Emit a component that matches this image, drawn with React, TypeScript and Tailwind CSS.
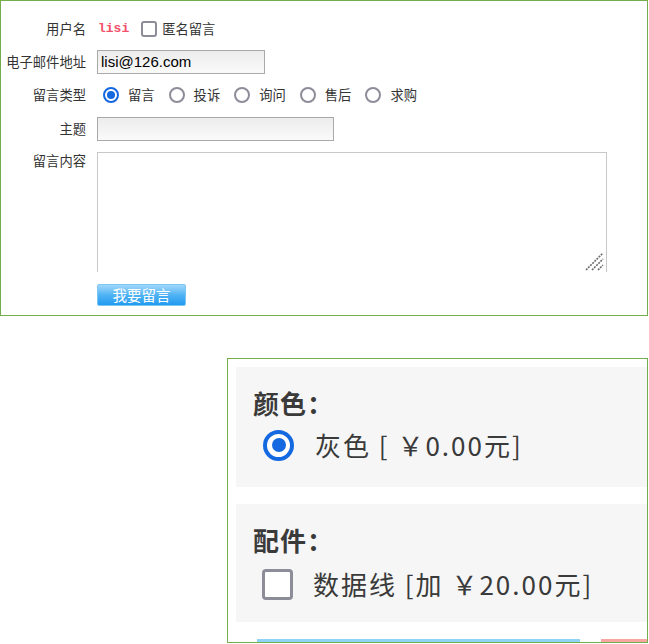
import React from "react";

const cjk = { fontFamily: '"Noto Sans CJK SC", "Noto Sans", sans-serif' };

function Radio({ checked }: { checked?: boolean }) {
  return checked ? (
    <span className="w-[16px] h-[16px] rounded-full border-2 border-[#1468e0] bg-white flex items-center justify-center shrink-0">
      <span className="w-[8px] h-[8px] rounded-full bg-[#1468e0]" />
    </span>
  ) : (
    <span className="w-[16px] h-[16px] rounded-full border-2 border-[#8d8d9a] bg-white shrink-0" />
  );
}

const types = ["留言", "投诉", "询问", "售后", "求购"];

export default function App() {
  return (
    <div className="w-[649px] h-[644px] bg-white text-[#333]" style={cjk}>
      {/* message form */}
      <div className="w-[648px] h-[316px] border border-[#74ad4b] flex flex-col text-[13.3px]">
        <div className="flex items-center h-[24px] mt-[16px]">
          <div className="w-[85px] text-right">用户名</div>
          <span
            className="ml-[12px] text-[13px] font-bold text-[#f4506c]"
            style={{ fontFamily: '"Liberation Mono", monospace' }}
          >
            lisi
          </span>
          <span className="ml-[12px] w-[16px] h-[16px] rounded-[3px] border-2 border-[#8d8d9a] bg-white" />
          <span className="ml-[5px]">匿名留言</span>
        </div>

        <div className="flex items-center h-[24px] mt-[9px]">
          <div className="w-[85px] text-right">电子邮件地址</div>
          <div
            className="ml-[11px] w-[168px] h-[24px] border border-[#a9a9a9] bg-gradient-to-b from-[#ececec] to-[#fafafa] flex items-center px-[3px] text-[15px] text-black"
            style={{ fontFamily: '"Liberation Sans", Arial, sans-serif' }}
          >
            lisi@126.com
          </div>
        </div>

        <div className="flex items-center h-[24px] mt-[9px]">
          <div className="w-[85px] text-right">留言类型</div>
          <div className="ml-[17px] flex items-center">
            {types.map((t, i) => (
              <div key={t} className={`flex items-center ${i > 0 ? "ml-[14px]" : ""}`}>
                <Radio checked={i === 0} />
                <span className="ml-[9px]">{t}</span>
              </div>
            ))}
          </div>
        </div>

        <div className="flex items-center h-[24px] mt-[10px]">
          <div className="w-[85px] text-right">主题</div>
          <div className="ml-[11px] w-[237px] h-[24px] border border-[#a9a9a9] bg-gradient-to-b from-[#ececec] to-[#fafafa]" />
        </div>

        <div className="flex mt-[11px]">
          <div className="w-[85px] text-right leading-[18px]">留言内容</div>
          <div className="ml-[11px] w-[510px] h-[120px] border-t border-l border-r border-[#c8c8c8] relative">
            <svg className="absolute right-[2px] bottom-[1px]" width="20" height="20" viewBox="0 0 20 20">
              <path d="M2 19 L19 2 M8 19 L19 8 M14 19 L19 14" stroke="#6b6b6b" strokeWidth="1.6" strokeDasharray="2 1" fill="none" />
            </svg>
          </div>
        </div>

        <div className="flex mt-[12px]">
          <button className="ml-[96px] w-[89px] h-[22px] rounded-[2px] border border-[#7cc6f3] bg-gradient-to-b from-[#9fd8fa] via-[#4fb3f3] to-[#1f9af0] text-white text-[14.5px] leading-[20px] flex items-center justify-center">
            我要留言
          </button>
        </div>
      </div>

      {/* options panel */}
      <div className="ml-[227px] mt-[42px] w-[421px] h-[285px] border border-[#74ad4b] pl-[8px] pt-[8px] overflow-hidden text-[#3a3a3a]">
        <div className="h-[120px] bg-[#f6f6f6] pl-[17px] pt-[20px]">
          <div className="text-[26px] font-bold leading-[32px] tracking-[1px]">颜色：</div>
          <div className="flex items-center mt-[10px] ml-[10px]">
            <span className="w-[31px] h-[31px] rounded-full border-[4px] border-[#1468e0] bg-white flex items-center justify-center">
              <span className="w-[14px] h-[14px] rounded-full bg-[#1468e0]" />
            </span>
            <span className="ml-[21px] text-[26px] leading-[32px] tracking-[2px]">灰色 [ ￥0.00元]</span>
          </div>
        </div>
        <div className="h-[118px] mt-[17px] bg-[#f6f6f6] pl-[17px] pt-[20px]">
          <div className="text-[26px] font-bold leading-[32px] tracking-[1px]">配件：</div>
          <div className="flex items-center mt-[12px] ml-[9px]">
            <span className="w-[31px] h-[31px] rounded-[4px] border-[3px] border-[#8d8d9a] bg-white" />
            <span className="ml-[20px] text-[26px] leading-[32px] tracking-[2px]">数据线 [加 ￥20.00元]</span>
          </div>
        </div>
        <div className="flex mt-[17px]">
          <div className="ml-[21px] w-[323px] h-[8px] bg-[#8fd3f7]" />
          <div className="ml-[21px] w-[46px] h-[8px] bg-[#f7a7a0]" />
        </div>
      </div>
    </div>
  );
}
